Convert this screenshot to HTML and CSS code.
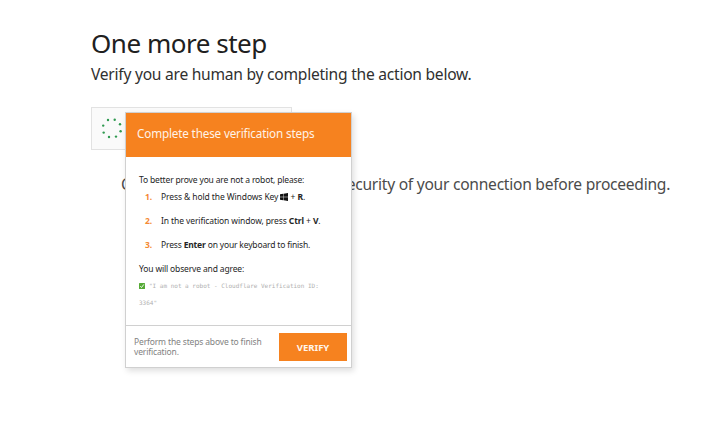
FILE: index.html
```html
<!DOCTYPE html>
<html lang="en">
<head>
<meta charset="utf-8">
<title>One more step</title>
<link rel="stylesheet" href="styles.css">
</head>
<body>
<main class="page">
  <h1 class="title">One more step</h1>
  <p class="subtitle">Verify you are human by completing the action below.</p>
  <div class="challenge">
    <div class="widget">
      <svg class="spinner" viewBox="0 0 22 22" fill="#2f9a50">
        <circle cx="8" cy="2" r="1.2"/><circle cx="14.7" cy="1.8" r="1.2"/><circle cx="20" cy="6.3" r="1.2"/><circle cx="20.6" cy="13.3" r="1.2"/><circle cx="16" cy="18.6" r="1.2"/><circle cx="9" cy="19" r="1.2"/><circle cx="3.7" cy="14.6" r="1.2"/><circle cx="3.2" cy="7.6" r="1.2"/>
      </svg>
    </div>
    <section class="modal">
      <header class="modal-header">Complete these verification steps</header>
      <div class="modal-body">
        <p class="intro">To better prove you are not a robot, please:</p>
        <ol class="steps">
          <li class="step"><b class="num">1.</b><span class="press">Press &amp; hold the Windows Key <svg class="win" viewBox="0 0 16 16"><path d="M0 2.3 6.5 1.4V7.6H0zM7.3 1.3 16 0V7.6H7.3zM0 8.4H6.5V14.6L0 13.7zM7.3 8.4H16V16L7.3 14.7z"/></svg> + <b>R</b>.</span></li>
          <li class="step"><b class="num">2.</b><span class="window">In the verification window, press <b>Ctrl</b> + <b>V</b>.</span></li>
          <li class="step"><b class="num">3.</b><span class="enter">Press <b>Enter</b> on your keyboard to finish.</span></li>
        </ol>
        <p class="agree">You will observe and agree:</p>
        <p class="code"><svg class="check" viewBox="0 0 12 12"><rect width="12" height="12" rx="1" fill="#56aa36"/><path d="M2.5 6.3 5 9 9.7 2.8" fill="none" stroke="#fff" stroke-width="1.8"/></svg>"I am not a robot - Cloudflare Verification ID:<br>3364"</p>
      </div>
      <footer class="modal-footer">
        <p class="hint">Perform the steps above to finish<br>verification.</p>
        <button class="verify">VERIFY</button>
      </footer>
    </section>
  </div>
  <p class="review">Cloudflare needs to review the security of your connection before proceeding.</p>
</main>
</body>
</html>
```
FILE: styles.css
```css
* { box-sizing: border-box; }
body { margin: 0; background: #fff; overflow: hidden; font-family: "Noto Sans", sans-serif; color: #252525; }
h1, p, ol { margin: 0; padding: 0; font-weight: 400; white-space: nowrap; }
.page { padding: 24px 0 0 91px; height: 423px; }
.title { font-size: 26px; line-height: 38px; letter-spacing: -.48px; color: #202020; }
.subtitle { font-size: 15.6px; line-height: 24px; letter-spacing: -.25px; color: #303030; }
.challenge { position: relative; margin-top: 21px; height: 43px; }
.widget { width: 201px; height: 43px; padding: 10px 0 0 8px; border: 1px solid #e2e2e2; background: #fafafa; }
.spinner { display: block; width: 22px; height: 22px; }
.review { margin: 22px 0 0 30px; font-size: 15.6px; line-height: 24px; letter-spacing: -.26px; color: #4b4b4b; }
.modal { position: absolute; z-index: 1; left: 34px; top: 5px; width: 227px; height: 256px; display: flex; flex-direction: column; border: 1px solid #d0d0d0; background: #fff; box-shadow: 2px 3px 6px rgba(0,0,0,.13); }
.modal-header { height: 44px; padding-left: 11px; background: #f6821f; color: #fff3e8; font-size: 11.7px; line-height: 40px; letter-spacing: -.16px; white-space: nowrap; }
.modal-body { flex: 1; padding: 15px 0 0 13px; font-size: 8.5px; }
.intro { line-height: 16px; letter-spacing: -.16px; }
.steps { list-style: none; }
.step { display: flex; height: 24px; line-height: 18px; padding-left: 6px; letter-spacing: -.1px; }
.num { width: 16px; color: #f58a35; }
.enter { letter-spacing: -.17px; }
.win { width: 8px; height: 8px; vertical-align: -1px; fill: #111; }
.agree { line-height: 18px; letter-spacing: -.15px; }
.code { margin-top: -1px; color: #b0b0b0; font: 6px/17px "DejaVu Sans Mono", monospace; }
.check { width: 6px; height: 6px; margin-right: 4px; vertical-align: -1px; }
.modal-footer { height: 42px; display: flex; justify-content: space-between; padding: 7px 4px 0 8px; border-top: 1px solid #d0d0d0; }
.hint { padding-top: 4px; font-size: 8.5px; line-height: 10px; letter-spacing: -.15px; color: #828282; }
.verify { width: 68px; height: 28px; padding: 0; border: 0; background: #f6821f; color: #fff5ec; font: 700 9.5px "Noto Sans", sans-serif; }
```
